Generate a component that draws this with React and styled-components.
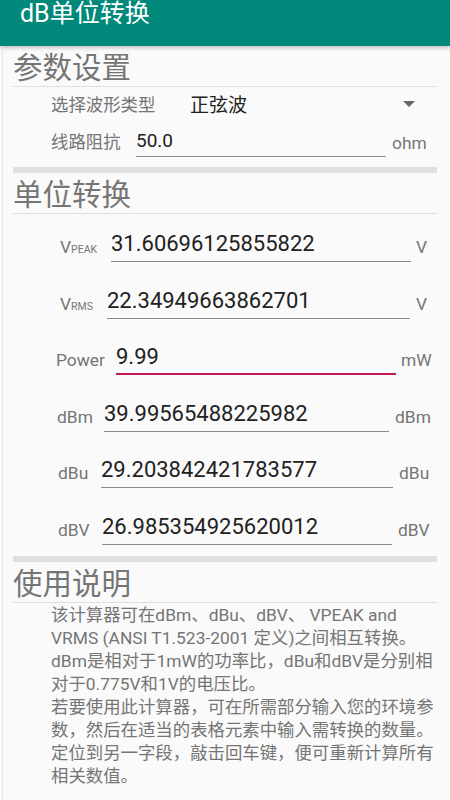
import styled, { createGlobalStyle } from "styled-components";

const GlobalStyle = createGlobalStyle`
  body {
    margin: 0;
    background: #fafafa;
    font-family: Roboto, "Noto Sans CJK SC", sans-serif;
  }
`;

const AppBar = styled.div`
  height: 46px;
  background-color: #00897b;
  color: #ffffff;
  font-size: 25px;
  line-height: 28px;
  padding-left: 20px;
  box-shadow: 0 2px 4px rgba(0, 0, 0, 0.22);
  position: relative;
  z-index: 1;
`;

const Body = styled.div`
  margin-left: 2px;
  border-left: 1px solid #e6e6e6;
  padding: 0 13px 0 10px;
  min-height: 754px;
`;

const SectionTitle = styled.div`
  margin-top: 4px;
  height: 36px;
  line-height: 36px;
  font-size: 29.5px;
  color: #757575;
  border-bottom: 1px solid #dedede;
`;

const ThickBar = styled.div`
  height: 6px;
  background-color: #e0e0e0;
  margin-top: ${(p) => p.$top}px;
`;

const SelectRow = styled.div`
  display: flex;
  align-items: center;
  height: 33px;
  padding-left: 38px;
  padding-right: 22px;
`;

const Label = styled.span`
  font-size: 17.4px;
  color: #757575;
  white-space: nowrap;
`;

const SelectLabel = styled(Label)`
  width: 139px;
`;

const SelectValue = styled.span`
  flex: 1;
  font-size: 19px;
  color: #212121;
`;

const Caret = styled.span`
  width: 0;
  height: 0;
  border-left: 6.5px solid transparent;
  border-right: 6.5px solid transparent;
  border-top: 6.5px solid #666666;
`;

const FieldRow = styled.div`
  display: grid;
  grid-template-columns: ${(p) => p.$start}px ${(p) => p.$width}px auto;
  align-items: start;
  height: ${(p) => p.$height}px;
  padding-top: ${(p) => p.$top}px;
  box-sizing: border-box;
`;

const RowLabel = styled(Label)`
  padding-left: ${(p) => p.$left}px;
  line-height: 20px;
  margin-top: ${(p) => p.$drop}px;
`;

const Small = styled.span`
  font-size: 10.5px;
`;

const Unit = styled(Label)`
  padding-left: ${(p) => p.$gap}px;
  line-height: 20px;
  margin-top: ${(p) => p.$drop}px;
`;

const Field = styled.input`
  display: block;
  box-sizing: content-box;
  width: 100%;
  height: ${(p) => p.$line}px;
  line-height: ${(p) => p.$line}px;
  padding: 0 0 ${(p) => (p.$focus ? 1 : 2)}px 0;
  margin: 0;
  border: 0;
  border-bottom: ${(p) => (p.$focus ? "2px solid #c2185b" : "1px solid #8c8c8c")};
  background: transparent;
  font-family: Roboto, "Noto Sans CJK SC", sans-serif;
  font-size: ${(p) => p.$size}px;
  color: #212121;
  outline: none;
`;

const Notes = styled.div`
  padding: 1px 0 0 38px;
  font-size: 17.4px;
  line-height: 23px;
  color: #757575;
`;

const NoteLine = styled.div`
  white-space: nowrap;
`;

const rows = [
  { key: "vpeak", label: <>V<Small>PEAK</Small></>, value: "31.60696125855822", unit: "V", left: 47, start: 98, width: 300, gap: 5 },
  { key: "vrms", label: <>V<Small>RMS</Small></>, value: "22.34949663862701", unit: "V", left: 47, start: 94, width: 303, gap: 6 },
  { key: "power", label: "Power", value: "9.99", unit: "mW", left: 43, start: 103, width: 280, gap: 5, focus: true },
  { key: "dbm", label: "dBm", value: "39.99565488225982", unit: "dBm", left: 44, start: 91, width: 285, gap: 6 },
  { key: "dbu", label: "dBu", value: "29.203842421783577", unit: "dBu", left: 45, start: 88, width: 292, gap: 6 },
  { key: "dbv", label: "dBV", value: "26.985354925620012", unit: "dBV", left: 45, start: 89, width: 290, gap: 6 },
];

const notes = [
  "该计算器可在dBm、dBu、dBV、 VPEAK and",
  "VRMS (ANSI T1.523-2001 定义)之间相互转换。",
  "dBm是相对于1mW的功率比，dBu和dBV是分别相",
  "对于0.775V和1V的电压比。",
  "若要使用此计算器，可在所需部分输入您的环境参",
  "数，然后在适当的表格元素中输入需转换的数量。",
  "定位到另一字段，敲击回车键，便可重新计算所有",
  "相关数值。",
];

const App = () => {
  return (
    <>
      <GlobalStyle />
      <AppBar>dB单位转换</AppBar>
      <Body>
        <SectionTitle>参数设置</SectionTitle>
        <SelectRow>
          <SelectLabel>选择波形类型</SelectLabel>
          <SelectValue>正弦波</SelectValue>
          <Caret />
        </SelectRow>
        <FieldRow $start={123} $width={250} $height={40} $top={8}>
          <RowLabel $left={38} $drop={4}>线路阻抗</RowLabel>
          <Field $size={19} $line={26} defaultValue="50.0" />
          <Unit $gap={6} $drop={5}>ohm</Unit>
        </FieldRow>
        <ThickBar $top={7} />

        <SectionTitle>单位转换</SectionTitle>
        {rows.map((r) => (
          <FieldRow key={r.key} $start={r.start} $width={r.width} $height={56.6} $top={15}>
            <RowLabel $left={r.left} $drop={8}>{r.label}</RowLabel>
            <Field $size={22} $line={30} $focus={r.focus} defaultValue={r.value} />
            <Unit $gap={r.gap} $drop={8}>{r.unit}</Unit>
          </FieldRow>
        ))}
        <ThickBar $top={2} />

        <SectionTitle>使用说明</SectionTitle>
        <Notes>
          {notes.map((line) => (
            <NoteLine key={line}>{line}</NoteLine>
          ))}
        </Notes>
      </Body>
    </>
  );
};

export default App;
